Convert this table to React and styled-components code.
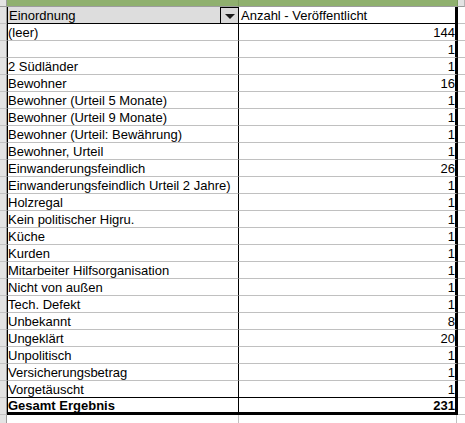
import React from "react";
import styled, { createGlobalStyle } from "styled-components";

const Global = createGlobalStyle`
  html, body { margin: 0; padding: 0; background: #ffffff; overflow: hidden; }
  * { box-sizing: border-box; }
`;

const Sheet = styled.div`
  width: 465px;
  height: 423px;
  overflow: hidden;
  font-family: "Liberation Sans", Arial, sans-serif;
  font-size: 13px;
  color: #000;
  background: #fff;
`;

const Row = styled.div`
  display: grid;
  grid-template-columns: 7px 232px 219px 1fr;
  height: ${(p) => p.$h || 17}px;
`;

const Corner = styled.div`
  background: #e3e3e3;
  border-right: 1px solid #9c9c9c;
  border-bottom: 1px solid #9c9c9c;
`;

const ColHead = styled.div`
  background: ${(p) => (p.$active ? "#8fb06e" : "#e3e3e3")};
  border-right: 1px solid ${(p) => (p.$active ? "#7c9c5c" : "#b4b4b4")};
  border-bottom: 1px solid #9c9c9c;
`;

const RowHead = styled.div`
  background: #e3e3e3;
  border-right: 1px solid #9c9c9c;
  border-bottom: 1px solid #c4c4c4;
`;

const Cell = styled.div`
  display: flex;
  align-items: center;
  white-space: nowrap;
  overflow: hidden;
  line-height: 16px;
  padding-top: 1px;
  border-bottom: ${(p) => p.$bottomW || 1}px solid ${(p) => p.$bottom || "#c0c0c0"};
  font-weight: ${(p) => (p.$bold ? 700 : 400)};
  background: ${(p) => p.$bg || "#fff"};
`;

const LabelCell = styled(Cell)`
  border-left: 1px solid #000;
  border-right: 1px solid #000;
  padding-left: ${(p) => (p.$head ? 1 : 0)}px;
  justify-content: space-between;
`;

const ValueCell = styled(Cell)`
  border-right: 3px solid #000;
  justify-content: ${(p) => (p.$head ? "flex-start" : "flex-end")};
  padding-left: ${(p) => (p.$head ? 2 : 0)}px;
  padding-right: 0;
`;

const Tail = styled.div`
  border-bottom: 1px solid #c0c0c0;
`;

const EmptyA = styled.div`
  border-right: 1px solid #c0c0c0;
`;
const EmptyB = styled.div`
  border-right: 1px solid #c0c0c0;
  margin-right: 1px;
`;

const DropButton = styled.div`
  align-self: stretch;
  width: 18px;
  margin-top: -1px;
  background: #d9d9d9;
  border-left: 1px solid #000;
  border-top: 1px solid #000;
  display: flex;
  align-items: center;
  justify-content: center;
  &::after {
    content: "";
    width: 0;
    height: 0;
    border-left: 5px solid transparent;
    border-right: 5px solid transparent;
    border-top: 5px solid #1a1a1a;
    margin-top: 1px;
  }
`;

const rows = [
  ["(leer)", 144],
  ["", 1],
  ["2 Südländer", 1],
  ["Bewohner", 16],
  ["Bewohner (Urteil 5 Monate)", 1],
  ["Bewohner (Urteil 9 Monate)", 1],
  ["Bewohner (Urteil: Bewährung)", 1],
  ["Bewohner, Urteil", 1],
  ["Einwanderungsfeindlich", 26],
  ["Einwanderungsfeindlich Urteil 2 Jahre)", 1],
  ["Holzregal", 1],
  ["Kein politischer Higru.", 1],
  ["Küche", 1],
  ["Kurden", 1],
  ["Mitarbeiter Hilfsorganisation", 1],
  ["Nicht von außen", 1],
  ["Tech. Defekt", 1],
  ["Unbekannt", 8],
  ["Ungeklärt", 20],
  ["Unpolitisch", 1],
  ["Versicherungsbetrag", 1],
  ["Vorgetäuscht", 1],
];

export default function App() {
  return (
    <Sheet>
      <Global />
      <Row $h={7}>
        <Corner />
        <ColHead $active />
        <ColHead $active />
        <ColHead />
      </Row>
      <Row>
        <RowHead />
        <LabelCell $head $bg="#dddddd" $bottom="#000">
          <span>Einordnung</span>
          <DropButton />
        </LabelCell>
        <ValueCell $head $bottom="#000">Anzahl - Veröffentlicht</ValueCell>
        <Tail />
      </Row>
      {rows.map(([label, n], i) => {
        const last = i === rows.length - 1;
        return (
          <Row key={i}>
            <RowHead />
            <LabelCell $bottom={last ? "#000" : undefined}>{label}</LabelCell>
            <ValueCell $bottom={last ? "#000" : undefined}>{n}</ValueCell>
            <Tail />
          </Row>
        );
      })}
      <Row>
        <RowHead />
        <LabelCell $bold $bottom="#000" $bottomW={3}>Gesamt Ergebnis</LabelCell>
        <ValueCell $bold $bottom="#000" $bottomW={3}>231</ValueCell>
        <Tail />
      </Row>
      <Row>
        <RowHead />
        <EmptyA />
        <EmptyB />
        <Tail />
      </Row>
    </Sheet>
  );
}
